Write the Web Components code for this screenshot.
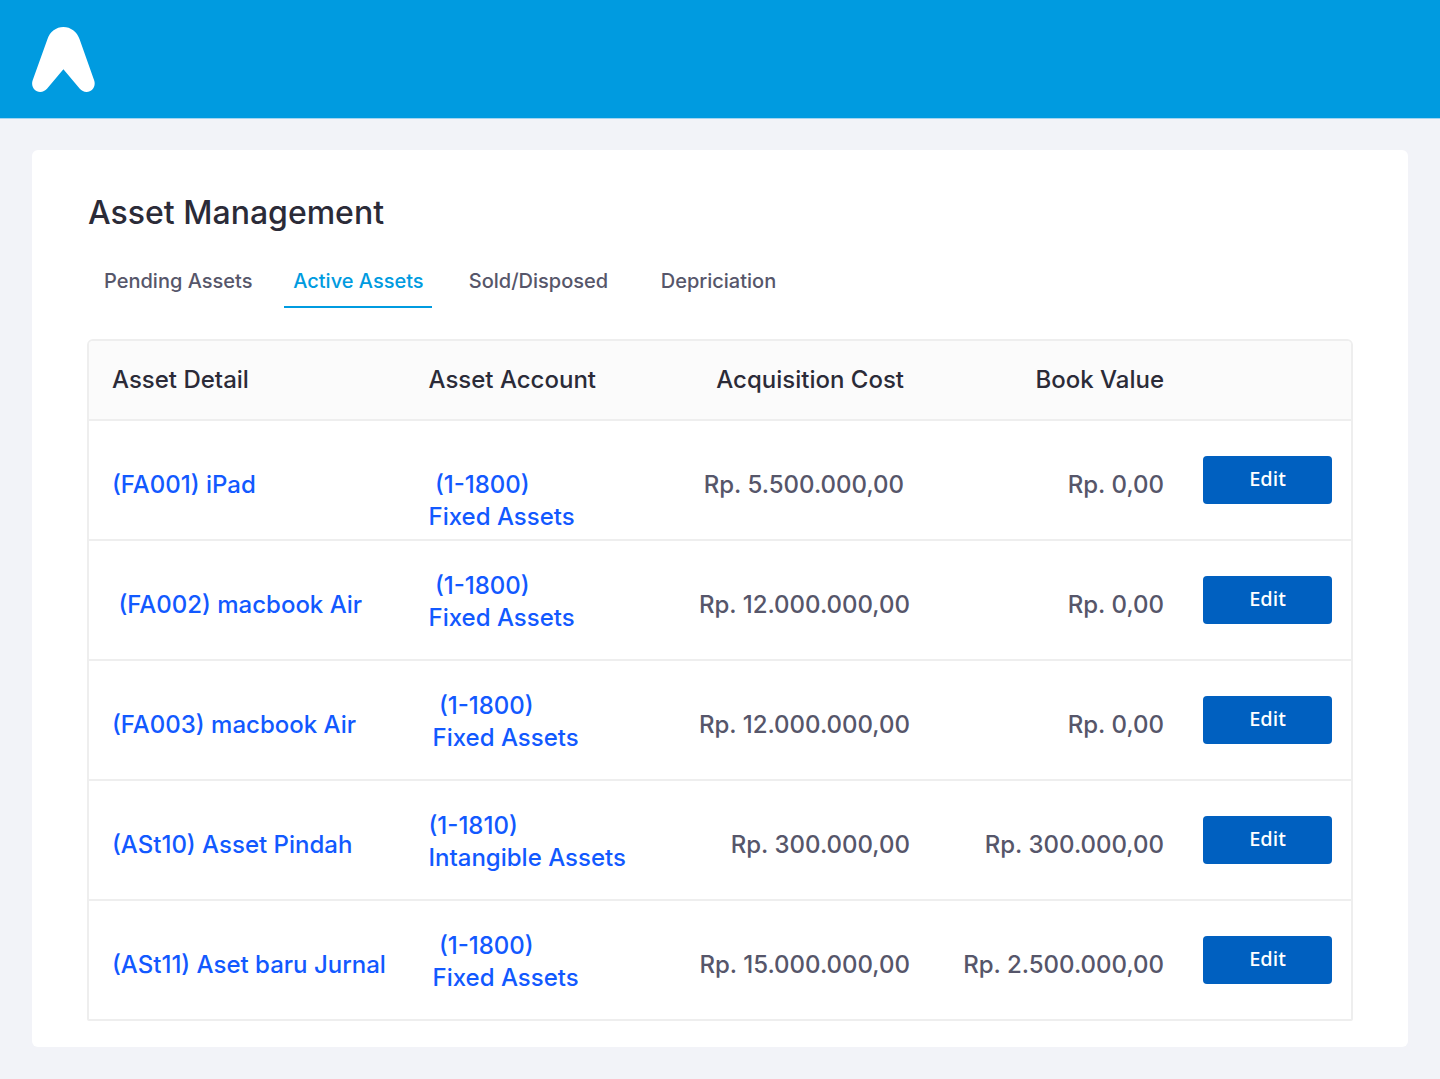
<!DOCTYPE html>
<html lang="id">
<head>
<meta charset="utf-8">
<meta name="viewport" content="width=device-width, initial-scale=1">
<title>Asset Management</title>
<style>
  body { margin: 0; background: #f2f3f8; color: #2b2b38; font-family: Inter, "Liberation Sans", sans-serif; font-weight: 500; }
</style>
</head>
<body>
<app-bar></app-bar>
<asset-card>
  <span slot="title">Asset Management</span>
  <tab-bar slot="tabs">
    <tab-link href="#pending">Pending Assets</tab-link>
    <tab-link href="#active" active>Active Assets</tab-link>
    <tab-link href="#sold">Sold/Disposed</tab-link>
    <tab-link href="#depriciation">Depriciation</tab-link>
  </tab-bar>
  <asset-table></asset-table>
</asset-card>

<script>
const attach = (el, html) => { el.attachShadow({ mode: "open" }).innerHTML = html; };

customElements.define("app-bar", class extends HTMLElement {
  constructor() {
    super();
    attach(this, `
      <style>
        :host { display: block; background: #009be0; border-bottom: 1px solid #a1d5f1; }
        header { display: flex; align-items: center; height: 118px; padding: 0 32px; }
        svg { display: block; }
      </style>
      <header>
        <svg width="63" height="66" viewBox="0 -1 63 66" fill="#fff" role="img" aria-label="Logo">
          <path d="M31.4 0C24.2 0 17.8 4.8 15.5 12L.6 53.5C-1.3 59.5 2.6 65 8.2 65C11 65 13.2 63.8 15 61.8L31.4 42.3L47.8 61.8C49.6 63.8 51.8 65 54.6 65C60.2 65 64.1 59.5 62.2 53.5L47.5 12C45 4.8 38.6 0 31.4 0Z"/>
        </svg>
      </header>`);
  }
});

customElements.define("asset-card", class extends HTMLElement {
  constructor() {
    super();
    attach(this, `
      <style>
        :host { display: block; margin: 31px 32px 32px; padding: 43px 55px 26px; background: #fff; border-radius: 6px; }
        h1 { margin: 0 0 28px; padding-left: 1px; font-size: 32px; line-height: 40px; font-weight: 500; }
      </style>
      <h1><slot name="title"></slot></h1>
      <slot name="tabs"></slot>
      <slot></slot>`);
  }
});

customElements.define("tab-bar", class extends HTMLElement {
  constructor() {
    super();
    attach(this, `
      <style>
        :host { display: block; margin-bottom: 31px; }
        nav { display: flex; gap: 32px; padding-left: 17px; }
      </style>
      <nav><slot></slot></nav>`);
  }
});

customElements.define("tab-link", class extends HTMLElement {
  constructor() {
    super();
    attach(this, `
      <style>
        :host { display: block; flex: 0 0 148px; }
        a { display: block; padding: 8px 0 13px; border-bottom: 2px solid transparent; color: #56566a; font-size: 20px; line-height: 24px; text-align: center; text-decoration: none; white-space: nowrap; }
        :host([active]) a { color: #009be0; border-color: #009be0; }
      </style>
      <a href="${this.getAttribute("href") || "#"}"><slot></slot></a>`);
  }
});

customElements.define("edit-button", class extends HTMLElement {
  constructor() {
    super();
    attach(this, `
      <style>
        :host { display: block; }
        button { display: block; width: 100%; height: 48px; padding: 0 0 2px; border: 0; border-radius: 4px; background: #0060c0; color: #fff; font: 500 20px/24px "Noto Sans", sans-serif; cursor: pointer; }
      </style>
      <button type="button"><slot></slot></button>`);
  }
});

const assets = [
  { detail: "(FA001) iPad", code: " (1-1800)", account: "Fixed Assets", cost: "Rp. 5.500.000,00", value: "Rp. 0,00", row: "first" },
  { detail: " (FA002) macbook Air", code: " (1-1800)", account: "Fixed Assets", cost: "Rp. 12.000.000,00", value: "Rp. 0,00", row: "" },
  { detail: "(FA003) macbook Air", code: " (1-1800)", account: "Fixed Assets", cost: "Rp. 12.000.000,00", value: "Rp. 0,00", row: "inset" },
  { detail: "(ASt10) Asset Pindah", code: "(1-1810)", account: "Intangible Assets", cost: "Rp. 300.000,00", value: "Rp. 300.000,00", row: "" },
  { detail: "(ASt11) Aset baru Jurnal", code: " (1-1800)", account: "Fixed Assets", cost: "Rp. 15.000.000,00", value: "Rp. 2.500.000,00", row: "inset" }
];

customElements.define("asset-table", class extends HTMLElement {
  constructor() {
    super();
    const rows = assets.map(a => `
      <tr class="${a.row}">
        <td><a href="#">${a.detail}</a></td>
        <td class="account"><a href="#">${a.code}<br>${a.account}</a></td>
        <td class="num cost">${a.cost}</td>
        <td class="num">${a.value}</td>
        <td class="action"><edit-button>Edit</edit-button></td>
      </tr>`).join("");
    attach(this, `
      <style>
        :host { display: block; border: 2px solid #eee; border-radius: 6px 6px 2px 2px; overflow: hidden; }
        table { width: 100%; table-layout: fixed; border-spacing: 0; font-size: 24px; line-height: 32px; }
        .c-detail { width: 25%; } .c-account { width: 19%; } .c-value { width: 260px; } .c-action { width: 163px; }
        th { height: 80px; box-sizing: border-box; padding: 0 24px; background: #fbfbfb; border-bottom: 2px solid #eee; font-weight: 500; text-align: left; white-space: nowrap; }
        td { height: 120px; box-sizing: border-box; padding: 48px 24px 0; border-bottom: 2px solid #eee; vertical-align: top; white-space: pre; color: #56566a; }
        tr:last-child td { border-bottom: 0; height: 118px; }
        th:first-child, td:first-child { padding-left: 23px; }
        .num { text-align: right; }
        .account { padding-top: 29px; }
        .first .account { padding-top: 48px; }
        .inset .account { padding-left: 28px; }
        .cost { padding-right: 18px; }
        th.num, .first .cost { padding-right: 24px; }
        .action { padding: 35px 19px 0 15px; white-space: normal; }
        a { color: #1259ff; text-decoration: none; }
      </style>
      <table>
        <colgroup><col class="c-detail"><col class="c-account"><col><col class="c-value"><col class="c-action"></colgroup>
        <thead><tr><th>Asset Detail</th><th>Asset Account</th><th class="num">Acquisition Cost</th><th class="num">Book Value</th><th aria-label="Action"></th></tr></thead>
        <tbody>${rows}</tbody>
      </table>`);
  }
});
</script>
</body>
</html>
